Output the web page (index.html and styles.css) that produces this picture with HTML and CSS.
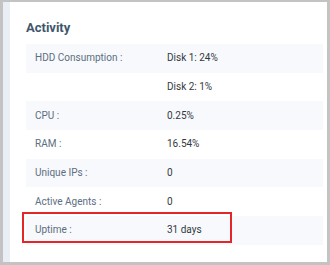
FILE: index.html
```html
<!DOCTYPE html>
<html>
<head>
<meta charset="utf-8">
<link rel="stylesheet" href="styles.css">
</head>
<body>
<div class="frame">
  <div class="strip"></div>
  <div class="card">
    <h2 class="title">Activity</h2>
    <div class="table">
      <div class="row alt"><div class="label">HDD Consumption :</div><div class="value">Disk 1: 24%</div></div>
      <div class="row"><div class="label"></div><div class="value">Disk 2: 1%</div></div>
      <div class="row alt"><div class="label">CPU :</div><div class="value">0.25%</div></div>
      <div class="row"><div class="label">RAM :</div><div class="value">16.54%</div></div>
      <div class="row alt"><div class="label">Unique IPs :</div><div class="value">0</div></div>
      <div class="row"><div class="label">Active Agents :</div><div class="value">0</div></div>
      <div class="row alt highlighted"><div class="label">Uptime :</div><div class="value">31 days</div><div class="mark"></div></div>
    </div>
  </div>
</div>
</body>
</html>
```
FILE: styles.css
```css
html, body {
  margin: 0;
  padding: 0;
}
body {
  width: 330px;
  height: 265px;
  background: #c3c3c3;
  font-family: Roboto, "Liberation Sans", sans-serif;
  overflow: hidden;
}
.frame {
  display: flex;
  margin: 2px 3px 0 3px;
  height: 260px;
}
.strip {
  width: 7px;
  background: #eaeff6;
}
.card {
  flex: 1;
  background: #ffffff;
  padding: 18px 4px 0 16px;
}
.title {
  margin: 0 0 8px 0;
  font-size: 13px;
  line-height: 16px;
  font-weight: 700;
  color: #3f566c;
}
.table {
  display: flex;
  flex-direction: column;
}
.row {
  display: grid;
  grid-template-columns: 141px 1fr;
  align-items: center;
  height: 28.7px;
  font-size: 10px;
  line-height: 12px;
}
.row.alt {
  background: #f7f9fc;
}
.label {
  padding-left: 9px;
  color: #5c6e80;
}
.value {
  color: #333a40;
}
.highlighted {
  position: relative;
}
.mark {
  position: absolute;
  left: -4px;
  top: -4px;
  width: 210px;
  height: 31px;
  box-sizing: border-box;
  border: 2px solid #e3262a;
}
```
